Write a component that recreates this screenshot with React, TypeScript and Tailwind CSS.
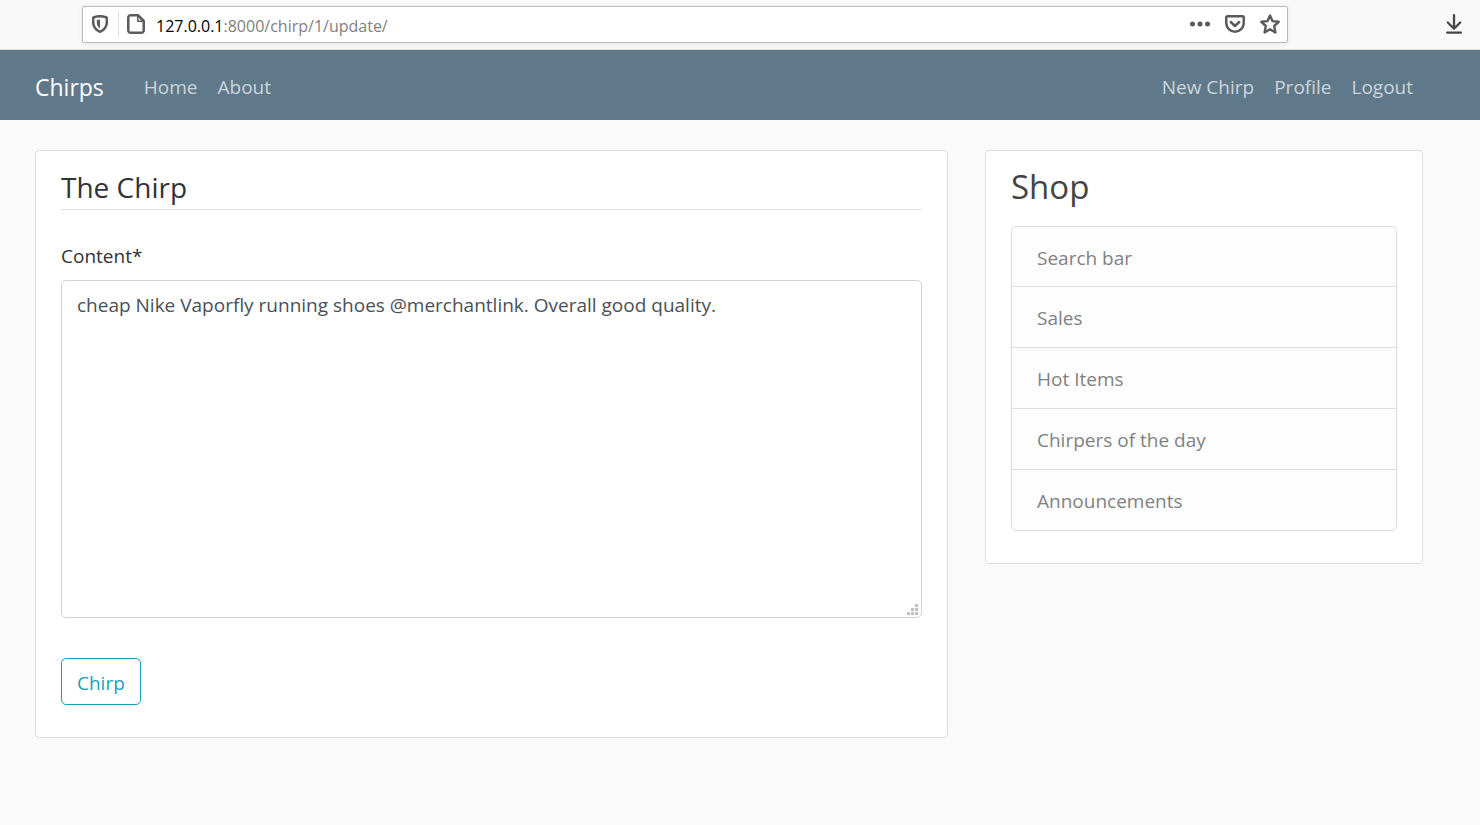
import { useState } from "react";

const shopItems = ["Search bar", "Sales", "Hot Items", "Chirpers of the day", "Announcements"];

const iconProps = {
  fill: "none",
  stroke: "currentColor",
  strokeWidth: 2.5,
  strokeLinecap: "round" as const,
  strokeLinejoin: "round" as const,
  "aria-hidden": true,
};

function ShieldIcon() {
  return (
    <svg width="16" height="18" viewBox="0 0 16 18" {...iconProps}>
      <path d="M8 1.2C5.8 1.2 3.4 1.6 1.6 2.4c-.3.1-.4.4-.4.7V7c0 4.8 2.9 8.200 6.800 9.800 3.900-1.600 6.800-5 6.800-9.800V3.100c0-.3-.1-.6-.4-.7C12.600 1.600 10.200 1.200 8 1.200z" />
      <path d="M8 4.500c-1.200 0-2.300.2-3.200.5V7.500c0 2.500 1.200 4.400 3.200 5.900z" fill="currentColor" stroke="none" />
    </svg>
  );
}

function PageIcon() {
  return (
    <svg width="18" height="20" viewBox="0 0 18 20" {...iconProps}>
      <path d="M3.700 1.250h7.300l5.750 5.750v9.300a2.450 2.450 0 0 1-2.450 2.450H3.700A2.450 2.450 0 0 1 1.250 16.300V3.700A2.450 2.450 0 0 1 3.700 1.250z" />
      <path d="M10.800 2.500v4.700h5" strokeWidth="1.500" />
    </svg>
  );
}

function PocketIcon() {
  return (
    <svg width="20" height="18" viewBox="0 0 20 18" {...iconProps}>
      <path d="M2.500 1.250h15a1.250 1.250 0 0 1 1.250 1.250v5.500a8.750 8.750 0 0 1-17.500 0V2.500a1.250 1.250 0 0 1 1.250-1.250z" />
      <path d="M5.800 7l4.200 4 4.200-4" />
    </svg>
  );
}

function StarIcon() {
  return (
    <svg width="20" height="20" viewBox="0 0 20 20" {...iconProps} strokeWidth={2.4}>
      <path d="M10 1.500l2.500 5.600 6.200.7-4.500 4.200 1.200 6.500L10 15.300l-5.400 3.200L5.800 12 1.300 7.800l6.200-.7z" />
    </svg>
  );
}

function DotsIcon() {
  return (
    <svg width="20" height="6" viewBox="0 0 20 6" fill="currentColor" aria-hidden="true">
      <circle cx="2.500" cy="3" r="2.500" />
      <circle cx="10" cy="3" r="2.500" />
      <circle cx="17.500" cy="3" r="2.500" />
    </svg>
  );
}

function DownloadIcon() {
  return (
    <svg width="16" height="20" viewBox="0 0 16 20" {...iconProps} strokeWidth={2.3}>
      <path d="M8 1.200v13.300M1.800 8.500L8 14.700l6.200-6.200M1.200 18.700h13.600" />
    </svg>
  );
}

function BrowserBar() {
  return (
    <div className="flex h-[50px] items-center border-b border-[#d9dcdc] bg-[#f9f9fa] pr-[18px] pl-[82px] text-[#5b5b5c]">
      <div className="flex h-[37px] flex-1 items-center rounded-[2px] border border-[#b9b9ba] bg-white pr-[7px] pb-[2px] pl-[9px] shadow-[0_1px_5px_rgba(0,0,0,0.08)]">
        <ShieldIcon />
        <span className="mr-[8px] ml-[10px] h-[26px] w-px bg-[#e0e0e1]" />
        <PageIcon />
        <p className="ml-[11px] flex-1 pt-[4px] text-[16px] leading-[20px] text-[#808080]">
          <span className="text-black">127.0.0.1</span>:8000/chirp/1/update/
        </p>
        <div className="flex items-center gap-[15px]">
          <button type="button" aria-label="Page actions"><DotsIcon /></button>
          <button type="button" aria-label="Save to Pocket"><PocketIcon /></button>
          <button type="button" aria-label="Bookmark this page"><StarIcon /></button>
        </div>
      </div>
      <button type="button" aria-label="Downloads" className="ml-[158px] pb-[2px] text-[#464647]"><DownloadIcon /></button>
    </div>
  );
}

function NavBar() {
  return (
    <nav className="flex h-[70px] items-center bg-[#5f788a] pt-[4px] pr-[67px] pl-[35px] text-[19px] leading-[30px] text-[#cbd5db]">
      <a href="#" className="mr-[40px] text-[23px] text-white">Chirps</a>
      <div className="flex flex-1 gap-[20px]">
        <a href="#">Home</a>
        <a href="#">About</a>
      </div>
      <div className="flex gap-[20px]">
        <a href="#">New Chirp</a>
        <a href="#">Profile</a>
        <a href="#">Logout</a>
      </div>
    </nav>
  );
}

function ChirpForm() {
  const [content, setContent] = useState(
    "cheap Nike Vaporfly running shoes @merchantlink. Overall good quality.",
  );
  return (
    <form className="rounded-[4px] border border-[#dddddd] bg-white px-[25px] pt-[16px] pb-[32px]" onSubmit={(e) => e.preventDefault()}>
      <h1 className="border-b border-[#dee2e6] pb-[2px] text-[28px] leading-[40px] text-[#333333]">The Chirp</h1>
      <label htmlFor="content" className="mt-[31px] block leading-[30px] text-[#333333]">Content*</label>
      <div className="relative mt-[9px]">
        <textarea
          id="content"
          value={content}
          onChange={(e) => setContent(e.target.value)}
          className="block h-[338px] w-full resize-none rounded-[5px] border border-[#ced4da] bg-white px-[15px] py-[9px] leading-[30px] text-[#495057] outline-none"
        />
        <svg className="pointer-events-none absolute right-[4px] bottom-[3px]" width="11" height="11" viewBox="0 0 11 11" fill="#bfbfbf" aria-hidden="true">
          <path d="M8 0h3v3H8zM4 4h3v3H4zM8 4h3v3H8zM0 8h3v3H0zM4 8h3v3H4zM8 8h3v3H8z" />
        </svg>
      </div>
      <button type="submit" className="mt-[40px] block h-[47px] rounded-[5px] border border-[#17a2b8] px-[15px] pt-[2px] leading-[30px] text-[#17a2b8]">
        Chirp
      </button>
    </form>
  );
}

function ShopPanel() {
  return (
    <aside className="rounded-[4px] border border-[#dddddd] bg-white px-[25px] pt-[15px] pb-[32px]">
      <h2 className="text-[33px] leading-[42px] text-[#444444]">Shop</h2>
      <ul className="mt-[18px] divide-y divide-[#dcdddd] rounded-[5px] border border-[#dcdddd] bg-[#fdfdfe]">
        {shopItems.map((item) => (
          <li key={item} className="px-[25px] pt-[16px] pb-[14px] leading-[30px] text-[#818182] first:pb-[13px]">{item}</li>
        ))}
      </ul>
    </aside>
  );
}

export default function App() {
  return (
    <div className="min-h-screen bg-[#fafafa] font-['Open_Sans','Noto_Sans',sans-serif] text-[19px]">
      <BrowserBar />
      <NavBar />
      <main className="grid grid-cols-[913fr_438fr] items-start gap-[37px] pt-[30px] pr-[57px] pl-[35px]">
        <ChirpForm />
        <ShopPanel />
      </main>
    </div>
  );
}
